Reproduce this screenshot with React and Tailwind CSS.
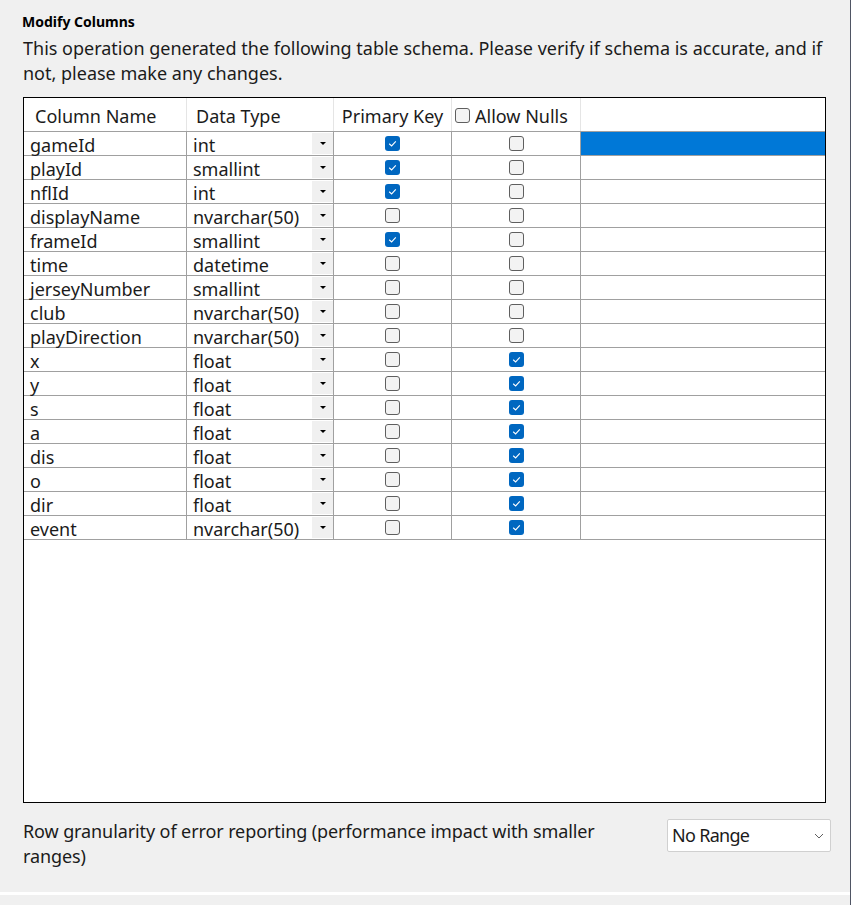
import React from "react";

const rows = [
  ["gameId", "int", true, false],
  ["playId", "smallint", true, false],
  ["nflId", "int", true, false],
  ["displayName", "nvarchar(50)", false, false],
  ["frameId", "smallint", true, false],
  ["time", "datetime", false, false],
  ["jerseyNumber", "smallint", false, false],
  ["club", "nvarchar(50)", false, false],
  ["playDirection", "nvarchar(50)", false, false],
  ["x", "float", false, true],
  ["y", "float", false, true],
  ["s", "float", false, true],
  ["a", "float", false, true],
  ["dis", "float", false, true],
  ["o", "float", false, true],
  ["dir", "float", false, true],
  ["event", "nvarchar(50)", false, true],
];

const Check = ({ on }) =>
  on ? (
    <span className="w-[15px] h-[15px] rounded-[3px] bg-[#0067c0] flex items-center justify-center">
      <svg width="11" height="11" viewBox="0 0 10 10">
        <path d="M2 5.2 L4.2 7.2 L8 3" fill="none" stroke="white" strokeWidth="1" />
      </svg>
    </span>
  ) : (
    <span className="w-[15px] h-[15px] rounded-[3px] bg-[#f3f3f3] border border-[#5f5f5f]" />
  );

export default function App() {
  return (
    <div
      className="w-[851px] h-[905px] bg-[#f0f0f0] text-[#1b1b1b] flex flex-col border-r border-[#4f5564]"
      style={{ fontFamily: '"Noto Sans", "Open Sans", sans-serif' }}
    >
      <div className="pl-[22px] pt-[13px] text-[14px] font-bold leading-[18px] text-black">Modify Columns</div>
      <p className="pl-[23px] pr-[20px] mt-[5px] text-[18px] leading-[25px]">
        This operation generated the following table schema. Please verify if schema is accurate, and if not, please
        make any changes.
      </p>

      {/* Grid */}
      <div className="ml-[23px] mt-[11px] w-[803px] h-[706px] border border-black bg-white text-[18px]">
        <div className="flex h-[34px] border-b border-[#a0a0a0] leading-[36px]">
          <div className="w-[163px] border-r border-[#e5e5e5] pl-[11px]">Column Name</div>
          <div className="w-[147px] border-r border-[#e5e5e5] pl-[9px]">Data Type</div>
          <div className="w-[118px] border-r border-[#e5e5e5] text-center">Primary Key</div>
          <div className="w-[129px] border-r border-[#e5e5e5] pl-[3px] pt-[2px] flex items-center gap-[5px]">
            <Check on={false} />
            <span className="leading-[30px]">Allow Nulls</span>
          </div>
          <div className="flex-1" />
        </div>
        {rows.map(([name, type, pk, nulls], i) => (
          <div key={name} className="flex h-[24px] border-b border-[#a0a0a0] leading-[26px]">
            <div className="w-[163px] border-r border-[#a0a0a0] pl-[6px]">{name}</div>
            <div className="w-[147px] border-r border-[#a0a0a0] pl-[6px] flex justify-between">
              <span>{type}</span>
              <span className="w-[21px] h-[21px] mt-[1px] bg-[#f0f0f0] flex items-center justify-center">
                <span className="w-0 h-0 border-l-[3px] border-r-[3px] border-t-[3px] border-l-transparent border-r-transparent border-t-black" />
              </span>
            </div>
            <div className="w-[118px] border-r border-[#a0a0a0] flex items-center justify-center">
              <Check on={pk} />
            </div>
            <div className="w-[129px] border-r border-[#a0a0a0] flex items-center justify-center">
              <Check on={nulls} />
            </div>
            <div className={i === 0 ? "flex-1 bg-[#0078d7]" : "flex-1"} />
          </div>
        ))}
      </div>

      <div className="flex justify-between items-start pl-[23px] pr-[19px] mt-[16px]">
        <p className="w-[590px] text-[18px] leading-[25px] tracking-[-0.1px]">
          Row granularity of error reporting (performance impact with smaller ranges)
        </p>
        <div className="w-[164px] h-[33px] bg-white border border-[#d0d0d0] rounded-[2px] flex items-center justify-between pl-[4px] pr-[6px] text-[18px] tracking-[-0.7px]">
          <span>No Range</span>
          <svg width="10" height="6" viewBox="0 0 10 6">
            <path d="M1 1 L5 5 L9 1" fill="none" stroke="#606060" strokeWidth="1" />
          </svg>
        </div>
      </div>
      <div className="mt-auto mb-[10px] h-[3px] bg-white" />
    </div>
  );
}
